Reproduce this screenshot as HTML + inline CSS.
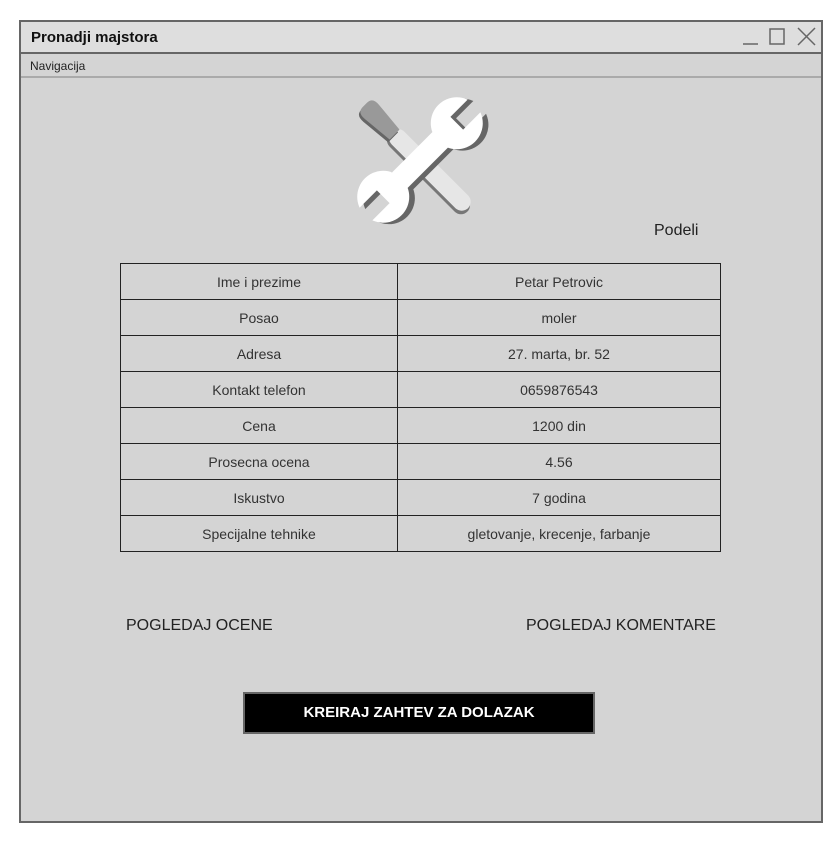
<!DOCTYPE html>
<html><head><style>
body{margin:0;width:840px;height:841px;background:#fff;position:relative;font-family:"Liberation Sans",sans-serif;overflow:hidden}
.a{position:absolute}
#win{left:19px;top:20px;width:800px;height:799px;border:2px solid #666;background:#d4d4d4}
#title{left:21px;top:22px;width:800px;height:30px;background:#dedede;border-bottom:2px solid #666}
#nav{left:21px;top:54px;width:800px;height:22px;border-bottom:2px solid #aaa}
table{position:absolute;left:120px;top:263px;width:601px;border-collapse:collapse}
td{border:1px solid #222;height:35px;padding:0;text-align:center;font-size:14px;color:#333}
</style></head><body>
<div class="a" id="win"></div>
<div class="a" id="title"></div>
<div class="a" style="left:31px;top:29px;font-size:15px;font-weight:bold;color:#111">Pronadji majstora</div>
<svg class="a" style="left:738px;top:24px" width="82" height="26" viewBox="0 0 82 26" fill="none" stroke="#666" stroke-width="1.5">
<line x1="5" y1="20" x2="20" y2="20"/><rect x="32" y="5" width="14" height="15"/><line x1="60" y1="4" x2="77" y2="21"/><line x1="77" y1="4" x2="60" y2="21"/></svg>
<div class="a" id="nav"></div>
<div class="a" style="left:30px;top:59px;font-size:12px;color:#222">Navigacija</div>
<svg class="a" style="left:340px;top:90px" width="160" height="140" viewBox="0 0 160 140">
<defs><mask id="m"><rect x="-100" y="-100" width="200" height="200" fill="#fff"/>
<rect x="52" y="-9" width="40" height="18" fill="#000"/><rect x="-92" y="-9" width="40" height="18" fill="#000"/></mask></defs>
<g transform="translate(80,70) rotate(45)">
<rect x="-40" y="-6" width="110" height="18" rx="9" fill="#777"/>
<rect x="-40" y="-9" width="108" height="18" rx="9" fill="#e6e6e6"/>
<path d="M-78 -3 Q-78 -11 -68 -10 L-36 -7 L-36 7 L-68 10 Q-78 11 -78 3 Z" fill="#666" transform="translate(1,3)"/>
<path d="M-78 -3 Q-78 -11 -68 -10 L-36 -7 L-36 7 L-68 10 Q-78 11 -78 3 Z" fill="#999"/>
</g>
<g transform="translate(80,70) rotate(-45)">
<g transform="translate(3,5)" fill="#666" mask="url(#m)"><rect x="-50" y="-11" width="100" height="22"/><circle cx="-52" cy="0" r="26"/><circle cx="52" cy="0" r="26"/></g>
<g fill="#fff" mask="url(#m)"><rect x="-50" y="-11" width="100" height="22"/><circle cx="-52" cy="0" r="26"/><circle cx="52" cy="0" r="26"/></g>
</g></svg>
<div class="a" style="left:654px;top:222px;font-size:16px;color:#222">Podeli</div>
<table>
<tr><td style="width:276px">Ime i prezime</td><td>Petar Petrovic</td></tr>
<tr><td>Posao</td><td>moler</td></tr>
<tr><td>Adresa</td><td>27. marta, br. 52</td></tr>
<tr><td>Kontakt telefon</td><td>0659876543</td></tr>
<tr><td>Cena</td><td>1200 din</td></tr>
<tr><td>Prosecna ocena</td><td>4.56</td></tr>
<tr><td>Iskustvo</td><td>7 godina</td></tr>
<tr><td>Specijalne tehnike</td><td>gletovanje, krecenje, farbanje</td></tr>
</table>
<div class="a" style="left:126px;top:617px;font-size:16px;color:#222">POGLEDAJ OCENE</div>
<div class="a" style="left:526px;top:617px;font-size:16px;color:#222">POGLEDAJ KOMENTARE</div>
<div class="a" style="left:243px;top:692px;width:348px;height:38px;background:#000;border:2px solid #666;color:#fff;font-weight:bold;font-size:15px;text-align:center;line-height:38px">KREIRAJ ZAHTEV ZA DOLAZAK</div>
</body></html>
